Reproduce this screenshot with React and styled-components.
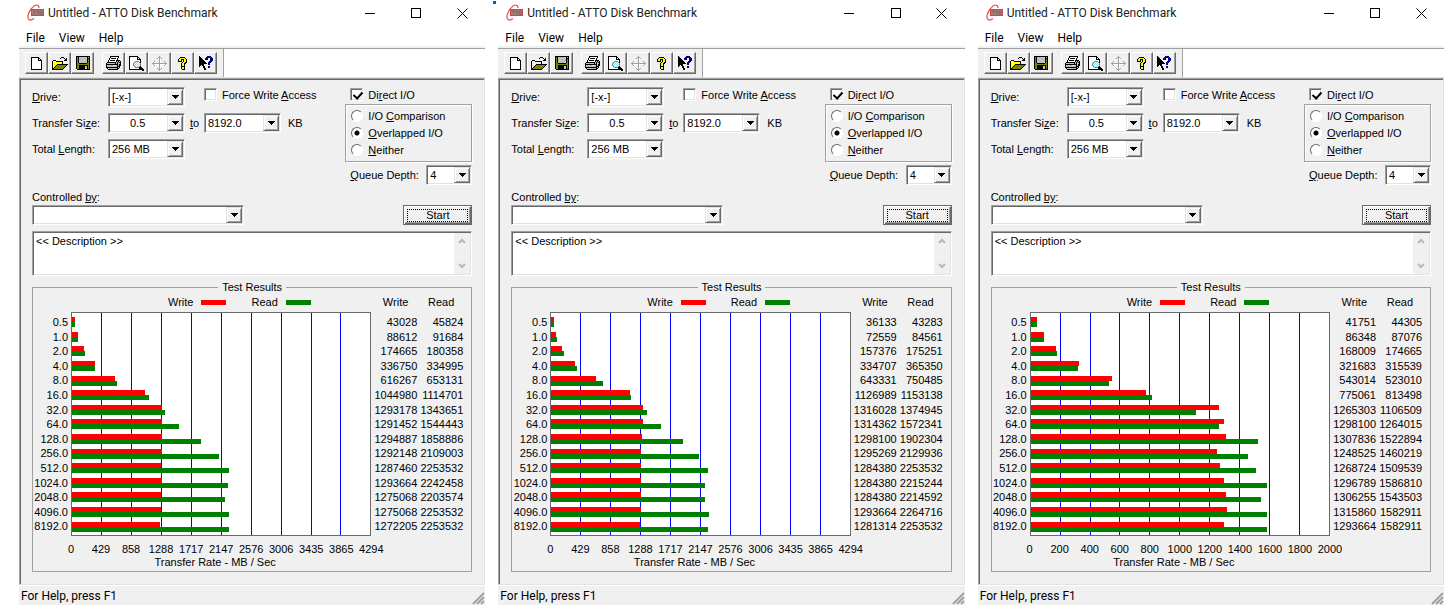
import React, { useId } from "react";
import styled, { createGlobalStyle } from "styled-components";

const colors = {
  face: "#f0f0f0",
  light: "#e3e3e3",
  shadow: "#a0a0a0",
  dark: "#696969",
  white: "#ffffff",
  black: "#000000",
  write: "#ff0000",
  read: "#008000",
  grid: "#0000ff",
};

const fonts = {
  dialog: `"Liberation Sans", Arial, sans-serif`,
  shell: `Roboto, "Open Sans", sans-serif`,
};

const sizes = [
  "0.5",
  "1.0",
  "2.0",
  "4.0",
  "8.0",
  "16.0",
  "32.0",
  "64.0",
  "128.0",
  "256.0",
  "512.0",
  "1024.0",
  "2048.0",
  "4096.0",
  "8192.0",
];

const wideAxis = [0, 429, 858, 1288, 1717, 2147, 2576, 3006, 3435, 3865, 4294];
const shortAxis = [0, 200, 400, 600, 800, 1000, 1200, 1400, 1600, 1800, 2000];

const runs = [
  {
    axis: wideAxis,
    results: [
      [43028, 45824],
      [88612, 91684],
      [174665, 180358],
      [336750, 334995],
      [616267, 653131],
      [1044980, 1114701],
      [1293178, 1343651],
      [1291452, 1544443],
      [1294887, 1858886],
      [1292148, 2109003],
      [1287460, 2253532],
      [1293664, 2242458],
      [1275068, 2203574],
      [1275068, 2253532],
      [1272205, 2253532],
    ],
  },
  {
    marker: true,
    axis: wideAxis,
    results: [
      [36133, 43283],
      [72559, 84561],
      [157376, 175251],
      [334707, 365350],
      [643331, 750485],
      [1126989, 1153138],
      [1316028, 1374945],
      [1314362, 1572341],
      [1298100, 1902304],
      [1295269, 2129936],
      [1284380, 2253532],
      [1284380, 2215244],
      [1284380, 2214592],
      [1293664, 2264716],
      [1281314, 2253532],
    ],
  },
  {
    axis: shortAxis,
    results: [
      [41751, 44305],
      [86348, 87076],
      [168009, 174665],
      [321683, 315539],
      [543014, 523010],
      [775061, 813498],
      [1265303, 1106509],
      [1298100, 1264015],
      [1307836, 1522894],
      [1248525, 1460219],
      [1268724, 1509539],
      [1296789, 1586810],
      [1306255, 1543503],
      [1315860, 1582911],
      [1293664, 1582911],
    ],
  },
];

const palette = {
  k: "#000000",
  w: "#ffffff",
  y: "#ffff00",
  o: "#808000",
  g: "#c0c0c0",
  s: "#a0a0a0",
  b: "#000080",
  c: "#80e0f0",
  d: "#808080",
};

const bitmaps = {
  New: [
    "kkkkkkkk...",
    "kwwwwwwkk..",
    "kwwwwwwkwk.",
    "kwwwwwwkkkk",
    "kwwwwwwwwwk",
    "kwwwwwwwwwk",
    "kwwwwwwwwwk",
    "kwwwwwwwwwk",
    "kwwwwwwwwwk",
    "kwwwwwwwwwk",
    "kwwwwwwwwwk",
    "kwwwwwwwwwk",
    "kkkkkkkkkkk",
  ],
  Open: [
    ".........kkk....",
    "........k...k.k.",
    ".............kk.",
    ".kkk........kkk.",
    "kywykkkkkkk.....",
    "kwywywywywk.....",
    "kywywywywyk.....",
    "kwywykkkkkkkkkkk",
    "kywykoooooooook.",
    "kwykoooooooook..",
    "kykoooooooook...",
    "kkoooooooook....",
    "kkkkkkkkkkk.....",
  ],
  Save: [
    "kkkkkkkkkkkkkk",
    "kokggggggggkgk",
    "kokggggggggkkk",
    "kokggggggggkok",
    "kokggggggggkok",
    "kokggggggggkok",
    "kokggggggggkok",
    "kookkkkkkkkook",
    "kooooooooooook",
    "kookkkkkkkkkok",
    "kookkkkkkggkok",
    "kookkkkkkggkok",
    "kookkkkkkggkok",
    ".kkkkkkkkkkkkk",
  ],
  Print: [
    "....kkkkkkkkk..",
    "....kwwwwwwwk..",
    "...kwkkkkkwk...",
    "...kwwwwwwwk...",
    "..kwkkkkkwkkkk.",
    "..kwwwwwwwkgkgk",
    ".kkkkkkkkkgkgkk",
    "kggggggggkgkggk",
    "kkkkkkkkkkkkgkk",
    "kggggggyyygkgkk",
    "kggggggggggkkk.",
    "kkkkkkkkkkkkgk.",
    ".kgggggggggkk..",
    "..kkkkkkkkkk...",
  ],
  "Print preview": [
    "kkkkkkkkk......",
    "kwwwwwwwkk.....",
    "kwwwwwwwkwk....",
    "kwwwwwwwkkkk...",
    "kwwwwwwwwwwk...",
    "kwwwwwddddwk...",
    "kwwwwdcwcwdk...",
    "kwwwdcwcwcwd...",
    "kwwwdwcwcwcd...",
    "kwwwdcwcwcwd...",
    "kwwwwdcwcwdk...",
    "kwwwwwddddkkk..",
    "kwwwwwwwwwkkkk.",
    "kkkkkkkkkkkkkkk",
    ".............kk",
  ],
  Move: [
    ".......s.......",
    "......sss......",
    ".....s.sws.....",
    ".......sw......",
    ".......sw......",
    "..s....sw...s..",
    ".sw....sw....s.",
    "sssssssssssssss",
    ".swwwwwswwwwwsw",
    "..s....sw...sw.",
    ".......sw...w..",
    ".......sw......",
    ".....s.sws.....",
    "......sssw.....",
    ".......sw......",
  ],
  Help: [
    "..kkkkk..",
    ".kyyyyyk.",
    "kyykkkyyk",
    "kyyk.kyyk",
    "kkkk.kyyk",
    "....kyykk",
    "...kyykk.",
    "...kyyk..",
    "...kyyk..",
    "...kkkk..",
    "...kyyk..",
    "...kyyk..",
    "....kkk..",
  ],
  "Context help": [
    "k.......bbbb..",
    "kk.....bbbbbb.",
    "kkk...bbb..bbb",
    "kkkk..bbb..bbb",
    "kkkkk......bbb",
    "kkkkkk....bbb.",
    "kkkkkkk..bbb..",
    "kkkkkkkk.bb...",
    "kkkkk....bb...",
    "kk.kk.........",
    "k...kk...bb...",
    "....kk...bb...",
    ".....kk.......",
    ".....kk.......",
  ],
};

const GlobalStyle = createGlobalStyle`
  * {
    box-sizing: border-box;
  }

  body {
    margin: 0;
    background: ${colors.white};
  }
`;

const Desktop = styled.main`
  display: grid;
  grid-template-columns: repeat(3, 1fr);
  gap: 13px;
  padding: 0 4px 0 19px;
  color: ${colors.black};
  font-family: ${fonts.dialog};
  font-size: 11px;
  line-height: 14px;
`;

const Window = styled.section`
  position: relative;
  min-width: 0;
`;

const Marker = styled.span`
  position: absolute;
  top: 1px;
  left: -5px;
  width: 3px;
  height: 3px;
  background: #0063b1;
`;

const TitleBar = styled.header`
  display: flex;
  align-items: center;
  height: 26px;
  padding-left: 8px;
  font-family: ${fonts.shell};
  font-size: 12px;
`;

const Title = styled.h1`
  flex: 1;
  margin: 0 0 0 3px;
  font-size: 12px;
  font-weight: 400;
  white-space: nowrap;
  color: #222222;
`;

const CaptionButton = styled.button`
  display: flex;
  align-items: center;
  justify-content: center;
  width: 46px;
  height: 26px;
  padding: 0;
  border: none;
  background: transparent;

  :hover {
    background: ${colors.light};
  }
`;

const MenuBar = styled.nav`
  display: flex;
  gap: 14px;
  height: 23px;
  padding: 3px 7px 0;
  border-bottom: 1px solid ${colors.shadow};
  box-shadow: inset 0 -2px 0 ${colors.face};
`;

const MenuItem = styled.button`
  height: 18px;
  padding: 0;
  border: none;
  background: transparent;
  color: ${colors.black};
  font-family: ${fonts.shell};
  font-size: 12px;
  line-height: 18px;
`;

const ToolbarRow = styled.div`
  display: flex;
  height: 29px;
  border-bottom: 1px solid ${colors.light};
`;

const Toolbar = styled.div`
  display: flex;
  align-items: center;
  gap: 8px;
  padding: 0 6px;
  border-right: 1px solid ${colors.shadow};
  background: ${colors.face};
`;

const ToolGroup = styled.div`
  display: flex;
`;

const ToolButton = styled.button`
  display: flex;
  align-items: center;
  justify-content: center;
  width: 23px;
  height: 22px;
  padding: 0;
  border: 1px solid;
  border-color: ${colors.white} ${colors.dark} ${colors.dark} ${colors.white};
  background: ${colors.face};
  box-shadow: inset -1px -1px 0 ${colors.shadow};
`;

const Body = styled.form`
  padding: 1px 12px 12px;
  border: 1px solid;
  border-color: ${colors.shadow} ${colors.light} ${colors.light} ${colors.shadow};
  background: ${colors.face};
  box-shadow: inset 1px 1px 0 ${colors.dark};
`;

const Settings = styled.div`
  display: flex;
  justify-content: space-between;
`;

const TestFields = styled.div`
  display: grid;
  grid-template-columns: 76px 77px 19px 77px auto;
  grid-auto-rows: 26px;
  align-items: center;
  padding-top: 4px;
`;

const FieldLabel = styled.label`
  text-align: ${({ $center }) => ($center ? "center" : "left")};
  white-space: nowrap;
`;

const Unit = styled.span`
  padding-left: 7px;
`;

const ForceAccess = styled.div`
  grid-column: 4 / 6;
  align-self: start;
  padding-top: 4px;
`;

const ModeFields = styled.div`
  display: flex;
  flex-direction: column;
  gap: 3px;
  width: 127px;
  padding-top: 8px;
`;

const DirectRow = styled.div`
  padding-left: 5px;
`;

const CheckLabel = styled.label`
  display: flex;
  align-items: center;
  gap: 5px;
  height: 13px;
  white-space: nowrap;
`;

const CheckBox = styled.input`
  appearance: none;
  width: 13px;
  height: 13px;
  margin: 0;
  border: 1px solid;
  border-color: ${colors.shadow} ${colors.white} ${colors.white} ${colors.shadow};
  background: ${colors.white};
  box-shadow: inset 1px 1px 0 ${colors.dark}, inset -1px -1px 0 ${colors.light};

  &:checked::after {
    content: "";
    display: block;
    width: 4px;
    height: 7px;
    margin: 1px 0 0 4px;
    border: solid ${colors.black};
    border-width: 0 2px 2px 0;
    transform: rotate(42deg);
  }
`;

const ModeGroup = styled.div`
  display: flex;
  flex-direction: column;
  height: 58px;
  padding: 3px 5px;
  border: 1px solid ${colors.shadow};
  box-shadow: 1px 1px 0 ${colors.white}, inset 1px 1px 0 ${colors.white};
`;

const RadioLabel = styled.label`
  display: flex;
  align-items: center;
  gap: 5px;
  height: 17px;
  white-space: nowrap;
`;

const Radio = styled.input`
  appearance: none;
  width: 12px;
  height: 12px;
  margin: 0;
  border: 1px solid;
  border-color: ${colors.dark} ${colors.white} ${colors.white} ${colors.dark};
  border-radius: 50%;
  background: ${colors.white};

  &:checked {
    background: radial-gradient(${colors.black} 0 2px, ${colors.white} 3px);
  }
`;

const QueueRow = styled.div`
  display: flex;
  align-items: center;
  justify-content: space-between;
  padding-left: 5px;
`;

const Combo = styled.span`
  position: relative;
  display: block;
  width: ${({ $width }) => $width || "77px"};
  height: 20px;
  border: 1px solid;
  border-color: ${colors.shadow} ${colors.white} ${colors.white} ${colors.shadow};
  background: ${colors.white};
  box-shadow: inset 1px 1px 0 ${colors.dark}, inset -1px -1px 0 ${colors.light};
`;

const Select = styled.select`
  appearance: none;
  display: block;
  width: 100%;
  height: 18px;
  padding: 0 18px 0 ${({ $indent }) => $indent || "3px"};
  border: none;
  background: transparent;
  color: ${colors.black};
  font-family: ${fonts.dialog};
  font-size: 11px;
  line-height: 18px;
`;

const ComboArrow = styled.span`
  position: absolute;
  top: 1px;
  right: 1px;
  display: flex;
  align-items: center;
  justify-content: center;
  width: 16px;
  height: 16px;
  border: 1px solid;
  border-color: ${colors.light} ${colors.dark} ${colors.dark} ${colors.light};
  background: ${colors.face};
  box-shadow: inset 1px 1px 0 ${colors.white}, inset -1px -1px 0 ${colors.shadow};
  pointer-events: none;
`;

const ControlRow = styled.div`
  display: flex;
  align-items: flex-end;
  justify-content: space-between;
  margin-top: 5px;
`;

const Controller = styled.div`
  display: flex;
  flex-direction: column;
  gap: 1px;
`;

const StartButton = styled.button`
  width: 69px;
  height: 20px;
  padding: 2px;
  border: 1px solid ${colors.dark};
  background: ${colors.face};
  box-shadow: inset 1px 1px 0 ${colors.white}, inset -1px -1px 0 ${colors.dark},
    inset -2px -2px 0 ${colors.shadow};
  color: ${colors.black};
  font-family: ${fonts.dialog};
  font-size: 11px;
  line-height: 11px;
`;

const FocusRect = styled.span`
  display: block;
  margin: 0 1px;
  border: 1px dotted ${colors.black};
`;

const DescriptionBox = styled.div`
  display: flex;
  height: 45px;
  margin-top: 6px;
  border: 1px solid;
  border-color: ${colors.shadow} ${colors.white} ${colors.white} ${colors.shadow};
  background: ${colors.white};
  box-shadow: inset 1px 1px 0 ${colors.dark}, inset -1px -1px 0 ${colors.light};
`;

const Description = styled.textarea`
  flex: 1;
  min-width: 0;
  padding: 2px 3px;
  border: none;
  outline: none;
  resize: none;
  overflow: hidden;
  background: transparent;
  color: ${colors.black};
  font-family: ${fonts.dialog};
  font-size: 11px;
  line-height: 14px;
`;

const ScrollBar = styled.span`
  display: flex;
  flex-direction: column;
  align-items: center;
  justify-content: space-between;
  width: 16px;
  margin: 1px 1px 1px 0;
  padding: 5px 0;
  background: ${colors.face};
`;

const ResultsGroup = styled.fieldset`
  min-width: 0;
  margin: 4px 0 0;
  padding: 1px 0 2px;
  border: 1px solid ${colors.shadow};
`;

const ResultsLegend = styled.legend`
  margin: 0 auto;
  padding: 0 4px;
`;

const Results = styled.div`
  display: grid;
  grid-template-columns: 38px minmax(0, 1fr) 100px;
  grid-template-rows: 17px 224px auto;
`;

const Key = styled.div`
  grid-column: 2;
  display: flex;
  align-items: flex-start;
  gap: 25px;
  padding-left: 97px;
`;

const KeyItem = styled.span`
  display: flex;
  align-items: center;
  gap: 8px;
`;

const Swatch = styled.i`
  width: 25px;
  height: 5px;
  background: ${({ color }) => color};
`;

const SizeLabels = styled.ol`
  grid-column: 1;
  grid-row: 2;
  display: flex;
  flex-direction: column;
  margin: 0;
  padding: 3px 3px 2px 0;
  list-style: none;
  text-align: right;
`;

const SizeLabel = styled.li`
  flex: 1;
`;

const Plot = styled.div`
  grid-column: 2;
  grid-row: 2;
  position: relative;
  display: flex;
  flex-direction: column;
  padding: 2px 0 1px;
  border: 1px solid ${colors.dark};
  background: ${colors.white};
`;

const GridLines = styled.div`
  position: absolute;
  inset: 0;
  display: flex;
`;

const GridCell = styled.span`
  flex: 1;

  &:not(:last-child) {
    border-right: 1px solid ${colors.grid};
  }
`;

const PlotRow = styled.div`
  position: relative;
  flex: 1;
  display: flex;
  flex-direction: column;
  justify-content: center;
`;

const Bar = styled.div`
  height: 5px;
  background: ${({ color }) => color};
`;

const AxisArea = styled.div`
  grid-column: 2;
  grid-row: 3;
  padding-top: 7px;
  line-height: 13px;
`;

const Axis = styled.div`
  display: flex;
  margin: 0 -5%;
`;

const Tick = styled.span`
  flex: 1;
  width: 0;
  text-align: center;
`;

const AxisTitle = styled.div`
  padding-right: 12px;
  text-align: center;
`;

const Rates = styled.table`
  grid-column: 3;
  grid-row: 1 / 3;
  display: flex;
  flex-direction: column;
  padding: 0 8px 2px 0;
  border-spacing: 0;

  thead {
    height: 20px;
  }

  tbody {
    flex: 1;
    display: flex;
    flex-direction: column;
  }

  tr {
    flex: 1;
    display: flex;
    justify-content: flex-end;
  }

  th,
  td {
    width: 48px;
    padding: 0;
    font-weight: 400;
    text-align: right;
  }

  th {
    padding-right: 9px;
  }
`;

const StatusBar = styled.footer`
  display: flex;
  align-items: center;
  justify-content: space-between;
  height: 20px;
  padding-left: 2px;
  border-top: 1px solid ${colors.white};
  background: ${colors.face};
  font-family: ${fonts.shell};
  font-size: 12px;
`;

const Grip = styled.svg`
  align-self: flex-end;
`;

// turns a bitmap into one path per palette colour
const PixelIcon = ({ rows }) => {
  const paths = {};
  rows.forEach((row, y) => {
    [...row].forEach((key, x) => {
      if (key !== ".") paths[key] = `${paths[key] || ""}M${x} ${y}h1v1h-1z`;
    });
  });
  return (
    <svg
      width={rows[0].length}
      height={rows.length}
      shapeRendering="crispEdges"
      aria-hidden="true"
    >
      {Object.keys(paths).map((key) => (
        <path key={key} d={paths[key]} fill={palette[key]} />
      ))}
    </svg>
  );
};

const Logo = () => (
  <svg width="18" height="18" viewBox="0 0 18 18" fill="none" aria-hidden="true">
    <path
      d="M12 4C12 0 8 0 5 4C1 8 0 14 2 15.500C3 16.500 5 16 7 14.500"
      stroke="#f04a48"
      strokeWidth="1.200"
    />
    <rect x="4" y="5" width="13" height="7" fill="#c84844" />
    <rect x="5" y="6" width="11" height="5" fill="#a87a76" />
    <path
      d="M6 7h3M7.500 7v3M10 7h2M11 7v3M13 7h2v3h-2z"
      stroke="#8a6460"
      strokeWidth="1"
    />
  </svg>
);

const Chevron = ({ up }) => (
  <svg width="8" height="6" aria-hidden="true">
    <path
      d={up ? "M1 5L4 2L7 5" : "M1 1L4 4L7 1"}
      fill="none"
      stroke="#b8b8b8"
      strokeWidth="2"
    />
  </svg>
);

const ComboBox = ({ width, indent, value, ...props }) => (
  <Combo $width={width}>
    <Select $indent={indent} defaultValue={value} {...props}>
      <option value={value}>{value}</option>
    </Select>
    <ComboArrow>
      <svg width="7" height="4" shapeRendering="crispEdges" aria-hidden="true">
        <path d="M0 0h7v1h-1v1h-1v1h-1v1h-1v-1h-1v-1h-1v-1h-1z" />
      </svg>
    </ComboArrow>
  </Combo>
);

const Tools = ({ names }) => (
  <ToolGroup>
    {names.map((name) => (
      <ToolButton key={name} type="button" aria-label={name}>
        <PixelIcon rows={bitmaps[name]} />
      </ToolButton>
    ))}
  </ToolGroup>
);

const Caption = () => (
  <TitleBar>
    <Logo />
    <Title>Untitled - ATTO Disk Benchmark</Title>
    <CaptionButton type="button" aria-label="Minimize">
      <svg width="11" height="11" shapeRendering="crispEdges">
        <path d="M0 5h10v1h-10z" />
      </svg>
    </CaptionButton>
    <CaptionButton type="button" aria-label="Maximize">
      <svg width="10" height="10" shapeRendering="crispEdges">
        <path d="M0 0h10v10h-10zM1 1v8h8v-8z" fillRule="evenodd" />
      </svg>
    </CaptionButton>
    <CaptionButton type="button" aria-label="Close">
      <svg width="11" height="11">
        <path d="M0.500 0.500L10.500 10.500M10.500 0.500L0.500 10.500" stroke="#000" />
      </svg>
    </CaptionButton>
  </TitleBar>
);

const Chart = ({ axis, results }) => {
  const max = axis[axis.length - 1] * 1000;
  const percent = (rate) => `${(rate / max) * 100}%`;

  return (
    <ResultsGroup>
      <ResultsLegend>Test Results</ResultsLegend>
      <Results>
        <Key>
          <KeyItem>
            Write <Swatch color={colors.write} />
          </KeyItem>
          <KeyItem>
            Read <Swatch color={colors.read} />
          </KeyItem>
        </Key>
        <SizeLabels>
          {sizes.map((size) => (
            <SizeLabel key={size}>{size}</SizeLabel>
          ))}
        </SizeLabels>
        <Plot>
          <GridLines>
            {axis.slice(1).map((tick) => (
              <GridCell key={tick} />
            ))}
          </GridLines>
          {results.map(([write, read], i) => (
            <PlotRow key={sizes[i]}>
              <Bar color={colors.write} style={{ width: percent(write) }} />
              <Bar color={colors.read} style={{ width: percent(read) }} />
            </PlotRow>
          ))}
        </Plot>
        <AxisArea>
          <Axis>
            {axis.map((tick) => (
              <Tick key={tick}>{tick}</Tick>
            ))}
          </Axis>
          <AxisTitle>Transfer Rate - MB / Sec</AxisTitle>
        </AxisArea>
        <Rates>
          <thead>
            <tr>
              <th scope="col">Write</th>
              <th scope="col">Read</th>
            </tr>
          </thead>
          <tbody>
            {results.map(([write, read], i) => (
              <tr key={sizes[i]}>
                <td>{write}</td>
                <td>{read}</td>
              </tr>
            ))}
          </tbody>
        </Rates>
      </Results>
    </ResultsGroup>
  );
};

const BenchmarkWindow = ({ axis, results, marker }) => {
  const id = useId();

  return (
    <Window>
      {marker && <Marker />}
      <Caption />
      <MenuBar>
        <MenuItem type="button">File</MenuItem>
        <MenuItem type="button">View</MenuItem>
        <MenuItem type="button">Help</MenuItem>
      </MenuBar>
      <ToolbarRow>
        <Toolbar>
          <Tools names={["New", "Open", "Save"]} />
          <Tools
            names={["Print", "Print preview", "Move", "Help", "Context help"]}
          />
        </Toolbar>
      </ToolbarRow>
      <Body onSubmit={(e) => e.preventDefault()}>
        <Settings>
          <TestFields>
            <FieldLabel htmlFor={`${id}drive`}>
              <u>D</u>rive:
            </FieldLabel>
            <ComboBox id={`${id}drive`} value="[-x-]" />
            <ForceAccess>
              <CheckLabel>
                <CheckBox type="checkbox" />
                <span>
                  Force Write <u>A</u>ccess
                </span>
              </CheckLabel>
            </ForceAccess>
            <FieldLabel htmlFor={`${id}from`}>
              Transfer Si<u>z</u>e:
            </FieldLabel>
            <ComboBox id={`${id}from`} value="0.5" indent="21px" />
            <FieldLabel htmlFor={`${id}to`} $center>
              <u>t</u>o
            </FieldLabel>
            <ComboBox id={`${id}to`} value="8192.0" />
            <Unit>KB</Unit>
            <FieldLabel htmlFor={`${id}length`}>
              Total <u>L</u>ength:
            </FieldLabel>
            <ComboBox id={`${id}length`} value="256 MB" />
          </TestFields>
          <ModeFields>
            <DirectRow>
              <CheckLabel>
                <CheckBox type="checkbox" defaultChecked />
                <span>
                  Di<u>r</u>ect I/O
                </span>
              </CheckLabel>
            </DirectRow>
            <ModeGroup role="radiogroup" aria-label="I/O mode">
              <RadioLabel>
                <Radio type="radio" name={`${id}mode`} />
                <span>
                  I/O <u>C</u>omparison
                </span>
              </RadioLabel>
              <RadioLabel>
                <Radio type="radio" name={`${id}mode`} defaultChecked />
                <span>
                  <u>O</u>verlapped I/O
                </span>
              </RadioLabel>
              <RadioLabel>
                <Radio type="radio" name={`${id}mode`} />
                <span>
                  <u>N</u>either
                </span>
              </RadioLabel>
            </ModeGroup>
            <QueueRow>
              <FieldLabel htmlFor={`${id}queue`}>
                <u>Q</u>ueue Depth:
              </FieldLabel>
              <ComboBox id={`${id}queue`} value="4" width="46px" />
            </QueueRow>
          </ModeFields>
        </Settings>
        <ControlRow>
          <Controller>
            <FieldLabel htmlFor={`${id}controller`}>
              Controlled <u>by</u>:
            </FieldLabel>
            <ComboBox id={`${id}controller`} value="" width="212px" />
          </Controller>
          <StartButton type="submit">
            <FocusRect>Start</FocusRect>
          </StartButton>
        </ControlRow>
        <DescriptionBox>
          <Description
            aria-label="Description"
            defaultValue="<< Description >>"
          />
          <ScrollBar>
            <Chevron up />
            <Chevron />
          </ScrollBar>
        </DescriptionBox>
        <Chart axis={axis} results={results} />
      </Body>
      <StatusBar>
        <span>For Help, press F1</span>
        <Grip width="13" height="13" aria-hidden="true">
          <path
            d="M1 12L12 1M5 12L12 5M9 12L12 9"
            stroke={colors.shadow}
            strokeWidth="2"
          />
        </Grip>
      </StatusBar>
    </Window>
  );
};

const App = () => (
  <>
    <GlobalStyle />
    <Desktop>
      {runs.map((run, i) => (
        <BenchmarkWindow key={i} {...run} />
      ))}
    </Desktop>
  </>
);

export default App;
